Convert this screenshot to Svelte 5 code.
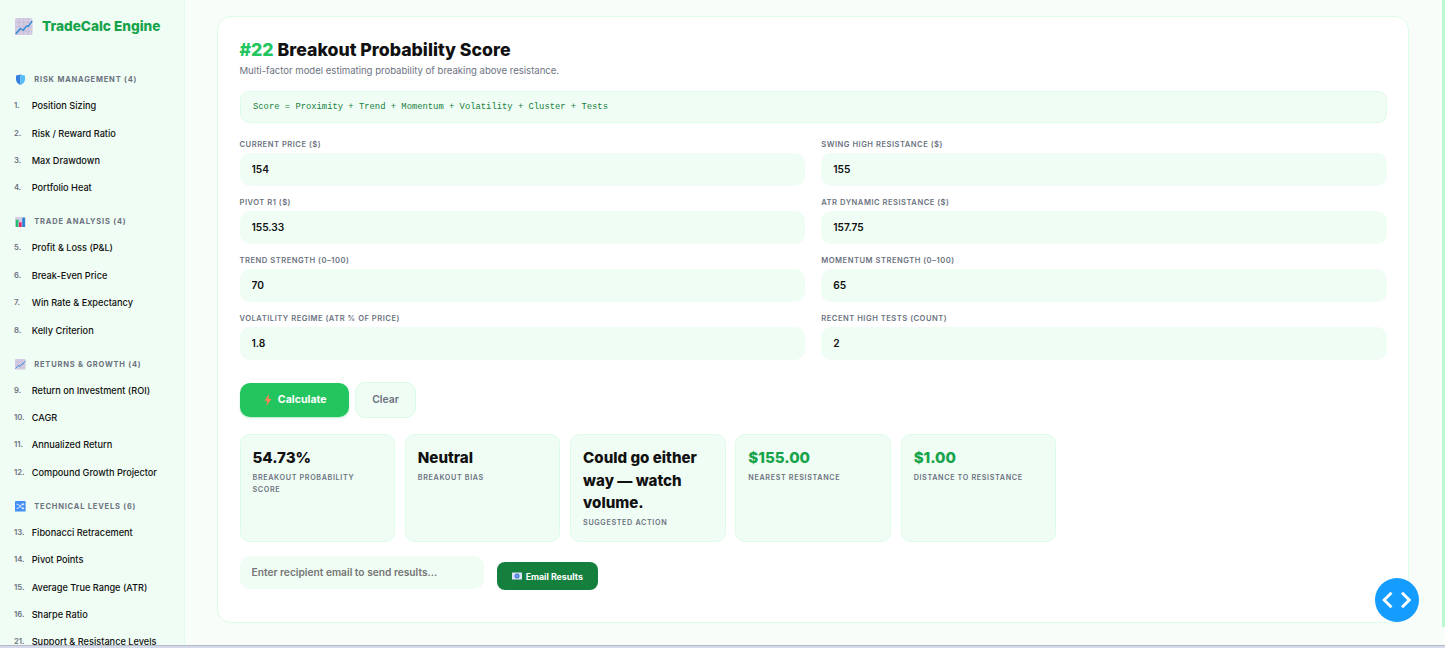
<script>
  const groups = [
    { icon: 'shield', name: 'Risk Management (4)', items: [[1, 'Position Sizing'], [2, 'Risk / Reward Ratio'], [3, 'Max Drawdown'], [4, 'Portfolio Heat']] },
    { icon: 'bars', name: 'Trade Analysis (4)', items: [[5, 'Profit & Loss (P&L)'], [6, 'Break-Even Price'], [7, 'Win Rate & Expectancy'], [8, 'Kelly Criterion']] },
    { icon: 'chart', name: 'Returns & Growth (4)', items: [[9, 'Return on Investment (ROI)'], [10, 'CAGR'], [11, 'Annualized Return'], [12, 'Compound Growth Projector']] },
    { icon: 'shuffle', name: 'Technical Levels (6)', items: [[13, 'Fibonacci Retracement'], [14, 'Pivot Points'], [15, 'Average True Range (ATR)'], [16, 'Sharpe Ratio'], [21, 'Support & Resistance Levels']] },
  ];

  let fields = $state([
    { label: 'Current Price ($)', value: '154' },
    { label: 'Swing High Resistance ($)', value: '155' },
    { label: 'Pivot R1 ($)', value: '155.33' },
    { label: 'ATR Dynamic Resistance ($)', value: '157.75' },
    { label: 'Trend Strength (0–100)', value: '70' },
    { label: 'Momentum Strength (0–100)', value: '65' },
    { label: 'Volatility Regime (ATR % of price)', value: '1.8' },
    { label: 'Recent High Tests (count)', value: '2' },
  ]);

  const results = [
    { value: '54.73%', label: 'Breakout Probability Score' },
    { value: 'Neutral', label: 'Breakout Bias' },
    { value: 'Could go either way — watch volume.', label: 'Suggested Action' },
    { value: '$155.00', label: 'Nearest Resistance', green: true },
    { value: '$1.00', label: 'Distance to Resistance', green: true },
  ];

  let email = $state('');

  function clear() {
    fields.forEach((f) => (f.value = ''));
  }
</script>

{#snippet icon(name)}
  <svg class="ico" class:narrow={name === 'shield'} viewBox={name === 'shield' ? '0 0 13 16' : '0 0 16 16'} aria-hidden="true">
    {#if name === 'chart'}
      <rect width="16" height="16" rx="1.6" fill="#d5cde3" />
      <path d="M4 0v16M8 0v16M12 0v16M0 4h16M0 8h16M0 12h16" stroke="#bdb2d0" stroke-width=".5" />
      <path d="M.6 14.6 5 9.6l2.6 1.6 3-4 1.6.4L15.6 2.8" fill="none" stroke="#2f8ad6" stroke-width="1.3" stroke-linejoin="round" />
    {:else if name === 'shield'}
      <path d="M6.5 0C5 1.5 3 2 0 2v5.5c0 4 2.9 6.9 6.5 8.5z" fill="#367fe0" />
      <path d="M6.5 0C8 1.5 10 2 13 2v5.5c0 4-2.9 6.9-6.5 8.5z" fill="#56bdfc" />
    {:else if name === 'bars'}
      <rect width="16" height="16" rx="1" fill="#d8d0e5" />
      <path d="M5.3 0v16M10.6 0v16M0 5.3h16M0 10.6h16" stroke="#bdb2d0" stroke-width=".5" />
      <rect x="1.2" y="4" width="3.9" height="12" fill="#22bf70" />
      <rect x="6" y="8" width="4" height="8" fill="#e8256f" />
      <rect x="11" y="1" width="4" height="15" fill="#2682d5" />
    {:else}
      <rect width="16" height="16" rx="1" fill="#458ff4" />
      <path d="M2.5 5h2.3l5.4 6h2.3M2.5 11h2.3l5.4-6h2.3" fill="none" stroke="#e6f1ff" stroke-width="1.4" />
      <path d="m11.3 2.7 3 2.3-3 2.3zM11.3 8.7l3 2.3-3 2.3z" fill="#e6f1ff" />
    {/if}
  </svg>
{/snippet}

<div class="shell">
  <aside>
    <div class="brand">
      <span class="brand-ico">{@render icon('chart')}</span>
      <span class="brand-name">TradeCalc Engine</span>
    </div>
    <nav>
      {#each groups as g (g.name)}
        <div class="group">
          <div class="g-head"><span class="g-ico">{@render icon(g.icon)}</span><span>{g.name}</span></div>
          {#each g.items as [n, label] (n)}
            <a class="item" href="#calc-{n}"><span class="num">{n}.</span>{label}</a>
          {/each}
        </div>
      {/each}
    </nav>
  </aside>

  <main>
    <section class="card">
      <h1><span>#22</span> Breakout Probability Score</h1>
      <p class="sub">Multi-factor model estimating probability of breaking above resistance.</p>
      <div class="formula">Score = Proximity + Trend + Momentum + Volatility + Cluster + Tests</div>

      <div class="fields">
        {#each fields as f (f.label)}
          <label class="field">
            <span>{f.label}</span>
            <input bind:value={f.value} />
          </label>
        {/each}
      </div>

      <div class="actions">
        <button class="primary">
          <svg class="bolt" viewBox="0 0 8 12" aria-hidden="true"><path d="M5 0 .5 6.8h2.8L2.2 12l5.3-7.1H4.6z" fill="#ff8357" /></svg>
          <span>Calculate</span>
        </button>
        <button class="ghost" onclick={clear}>Clear</button>
      </div>

      <div class="results">
        {#each results as r (r.label)}
          <div class="result">
            <div class="r-value" class:green={r.green}>{r.value}</div>
            <div class="r-label">{r.label}</div>
          </div>
        {/each}
      </div>

      <div class="mail">
        <input type="text" placeholder="Enter recipient email to send results…" bind:value={email} />
        <button class="send">
          <svg class="envelope" viewBox="0 0 10 8" aria-hidden="true">
            <rect y=".5" width="10" height="7" rx=".5" fill="#dbe2f5" />
            <circle cx="5" cy="4" r="2.5" fill="#3f78d8" />
            <circle cx="5" cy="4" r="1" fill="none" stroke="#a8c5ff" stroke-width=".6" />
          </svg>
          <span>Email Results</span>
        </button>
      </div>
    </section>
  </main>
  <div class="scroll"></div>
  <div class="edge"></div>
  <button class="fab" aria-label="View code">
    <svg viewBox="0 0 44 44" fill="none" stroke="#fff" stroke-width="2.9" aria-hidden="true"><path d="M16.5 14.7 9.2 22l7.3 7.3M27 14.7l7.3 7.3-7.3 7.3" /></svg>
  </button>
</div>

<style>
  :global(body) { margin: 0; overflow: hidden; }
  .shell {
    position: relative; display: flex; width: 1445px; height: 648px; overflow: hidden;
    background: #f8fdf9; color: #111; font-family: Inter, "Liberation Sans", sans-serif;
  }
  .shell * { box-sizing: border-box; }
  button, input { font-family: inherit; margin: 0; }

  aside { width: 185px; height: 100%; flex: none; background: #f0fdf4; border-right: 1px solid #e3fbeb; overflow: hidden; }
  .brand { display: flex; align-items: center; height: 59.1px; padding: 0 0 6.3px 15px; gap: 9.5px; }
  .brand-ico { display: flex; width: 17.5px; }
  .brand-name { font-size: 13.65px; font-weight: 800; color: #16a34a; white-space: nowrap; }
  .ico { display: block; width: 100%; flex: none; }
  .ico.narrow { width: 9px; margin-left: 1px; }
  .g-head {
    display: flex; align-items: center; gap: 8.7px; height: 32.7px; padding: 8.6px 0 0 15px;
    font-size: 7.5px; font-weight: 700; letter-spacing: 0.8px; color: #6b7280; text-transform: uppercase; white-space: nowrap;
  }
  .g-ico { width: 10.6px; }
  .item {
    display: flex; align-items: center; height: 27.4px; padding: 0.4px 0 0 14px;
    font-size: 9.2px; font-weight: 500; color: #111; text-decoration: none; white-space: nowrap;
  }
  .num { width: 17.7px; font-size: 7.7px; font-weight: 600; color: #6b7280; }

  main { flex: 1; padding: 16px 36px 0 32px; }
  .card { height: 607px; padding: 22px 21.5px; background: #fff; border: 1px solid #dcfce7; border-radius: 14px; }
  h1 { margin: 0; font-size: 17.7px; line-height: 22px; font-weight: 800; }
  h1 span { color: #22c55e; }
  .sub { margin: 3.5px 0 14px; font-size: 9.55px; line-height: 12px; color: #6b7280; }
  .formula {
    height: 32px; padding: 0 12.5px; display: flex; align-items: center;
    background: #f0fdf4; border: 1px solid #dcfce7; border-radius: 9px;
    font-family: "Courier New", "Liberation Mono", monospace; font-size: 8.83px; color: #15803d;
  }

  .fields { display: grid; grid-template-columns: 1fr 1fr; gap: 9.6px 16.5px; margin-top: 14.6px; }
  .field { display: flex; flex-direction: column; height: 48.5px; justify-content: space-between; }
  .field span { padding-top: 0.7px; font-size: 7.6px; line-height: 13px; font-weight: 600; letter-spacing: 0.5px; color: #6b7280; text-transform: uppercase; }
  input {
    height: 33px; padding: 0 12px; border: 0; border-radius: 10px; background: #f0fdf4;
    font-size: 10.2px; font-weight: 600; color: #111; outline: none;
  }
  input::placeholder { color: #757575; opacity: 1; }

  .actions { display: flex; gap: 6.6px; margin-top: 22px; height: 36px; align-items: center; }
  .primary, .ghost, .send { display: flex; align-items: center; justify-content: center; padding: 0; border: 0; white-space: nowrap; }
  .primary { width: 109px; height: 34px; padding-left: 3px; gap: 5.5px; border-radius: 10px; background: #22c55e; color: #fff; font-size: 10.6px; font-weight: 700; box-shadow: 0 1px 2px rgba(34,197,94,0.35); }
  .bolt { width: 8px; height: 12px; }
  .ghost { width: 60.8px; height: 36px; border: 1px solid #dcfce7; border-radius: 10px; background: #f0fdf4; color: #6b7280; font-size: 10.4px; font-weight: 600; }

  .results { display: grid; grid-template-columns: repeat(5, 155.7px); gap: 9.6px; margin-top: 16px; height: 108.2px; }
  .result { padding: 12.3px 12px 0; background: #f0fdf4; border: 1px solid #dcfce7; border-radius: 10px; }
  .r-value { font-size: 15.1px; line-height: 22.5px; font-weight: 800; }
  .r-value.green { color: #16a34a; }
  .r-label { margin-top: 2.5px; font-size: 7.2px; line-height: 11.5px; font-weight: 600; letter-spacing: 0.65px; color: #6b7280; text-transform: uppercase; }

  .mail { display: flex; gap: 12.5px; margin-top: 13.8px; }
  .mail input { width: 244.5px; }
  .send { width: 101px; height: 27.5px; margin-top: 6.5px; padding-left: 1px; gap: 3.5px; border-radius: 8px; background: #15803d; color: #fff; font-size: 8.8px; font-weight: 700; }
  .envelope { width: 10px; height: 8px; }

  /* overlays pinned to the window edges */
  .scroll { position: absolute; top: 0; right: 0; width: 3px; height: 627px; background: #bbf7d0; }
  .edge { position: absolute; left: 0; right: 0; bottom: 0; height: 3px; background: #d5daeb; border-top: 1px solid #b4bac9; }
  .fab { position: absolute; right: 26.5px; bottom: 26.5px; width: 44px; height: 44px; padding: 0; border: 0; border-radius: 50%; background: #149cff; }
  .fab svg { display: block; width: 44px; height: 44px; }
</style>
